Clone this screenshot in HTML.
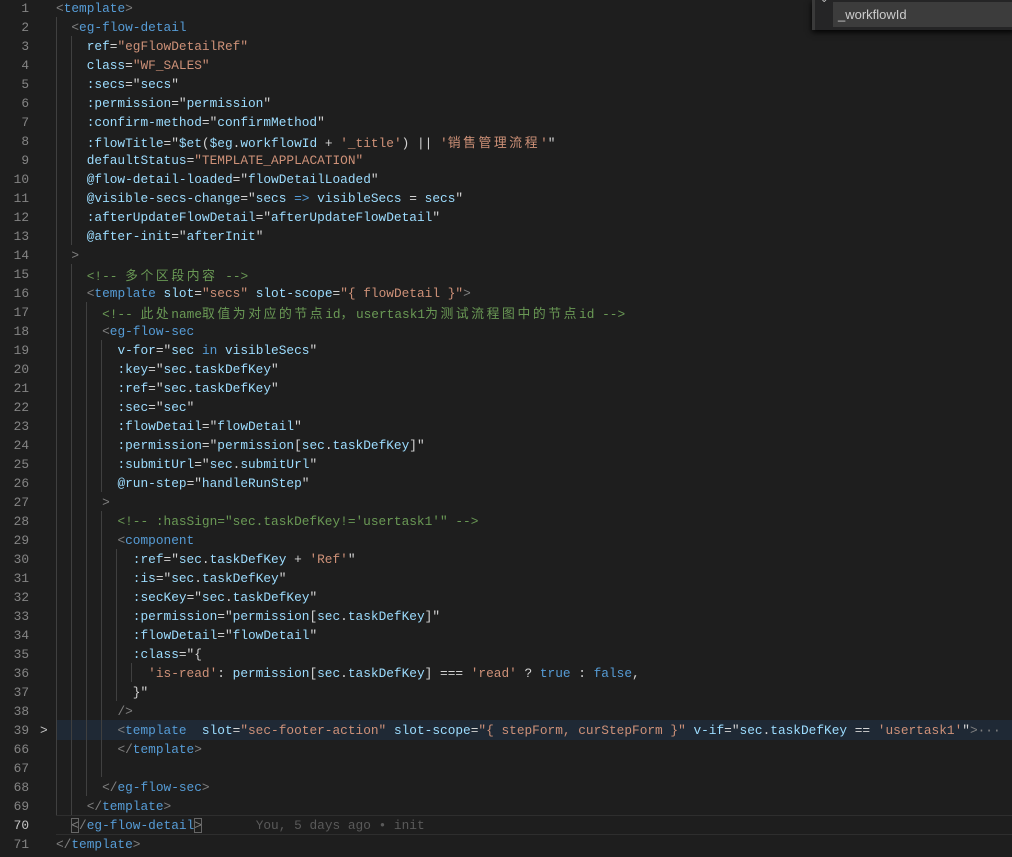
<!DOCTYPE html>
<html><head><meta charset="utf-8"><style>
html,body{margin:0;padding:0;background:#1e1e1e;width:1012px;height:857px;overflow:hidden;position:relative}
.r{position:absolute;left:0;height:19px;line-height:19px;width:1012px;white-space:pre;font-family:"Liberation Mono","Noto Sans CJK SC",monospace;font-size:12.8px;color:#d4d4d4}
.n{position:absolute;left:0;width:29px;text-align:right;color:#858585}
.x{position:absolute;left:56px}
.t{color:#569cd6}.g{color:#808080}.a{color:#9cdcfe}.s{color:#ce9178}.c{color:#6a9955}.k{color:#569cd6}.w{color:#d4d4d4}
.z{font-family:"Noto Sans CJK SC",sans-serif;letter-spacing:2.6px}
.gd{position:absolute;width:1px;background:#404040}
</style></head><body>
<div style="position:absolute;left:56px;right:0;top:720px;height:20px;background:#1f2935"></div>
<div style="position:absolute;left:56px;right:0;top:815px;height:18px;border-top:1px solid #2e2e2e;border-bottom:1px solid #2e2e2e"></div>
<div class="gd" style="left:56px;top:17px;height:798px"></div>
<div class="gd" style="left:71px;top:36px;height:209px"></div>
<div class="gd" style="left:71px;top:264px;height:551px"></div>
<div class="gd" style="left:86px;top:302px;height:494px"></div>
<div class="gd" style="left:101px;top:340px;height:152px"></div>
<div class="gd" style="left:101px;top:511px;height:266px"></div>
<div class="gd" style="left:116px;top:549px;height:152px"></div>
<div class="gd" style="left:131px;top:663px;height:19px"></div>

<div class="r" style="top:-1.5px"><span class="n">1</span><span class="x"><span class="g">&lt;</span><span class="t">template</span><span class="g">&gt;</span></span></div>
<div class="r" style="top:17.5px"><span class="n">2</span><span class="x">  <span class="g">&lt;</span><span class="t">eg-flow-detail</span></span></div>
<div class="r" style="top:36.5px"><span class="n">3</span><span class="x">    <span class="a">ref</span>=<span class="s">"egFlowDetailRef"</span></span></div>
<div class="r" style="top:55.5px"><span class="n">4</span><span class="x">    <span class="a">class</span>=<span class="s">"WF_SALES"</span></span></div>
<div class="r" style="top:74.5px"><span class="n">5</span><span class="x">    <span class="a">:secs</span>="<span class="a">secs</span>"</span></div>
<div class="r" style="top:93.5px"><span class="n">6</span><span class="x">    <span class="a">:permission</span>="<span class="a">permission</span>"</span></div>
<div class="r" style="top:112.5px"><span class="n">7</span><span class="x">    <span class="a">:confirm-method</span>="<span class="a">confirmMethod</span>"</span></div>
<div class="r" style="top:131.5px"><span class="n">8</span><span class="x">    <span class="a">:flowTitle</span>="<span class="a">$et</span>(<span class="a">$eg</span>.<span class="a">workflowId</span> + <span class="s">'_title'</span>) || <span class="s">'<span class="z">销售管理流程</span>'</span>"</span></div>
<div class="r" style="top:150.5px"><span class="n">9</span><span class="x">    <span class="a">defaultStatus</span>=<span class="s">"TEMPLATE_APPLACATION"</span></span></div>
<div class="r" style="top:169.5px"><span class="n">10</span><span class="x">    <span class="a">@flow-detail-loaded</span>="<span class="a">flowDetailLoaded</span>"</span></div>
<div class="r" style="top:188.5px"><span class="n">11</span><span class="x">    <span class="a">@visible-secs-change</span>="<span class="a">secs</span> <span class="k">=&gt;</span> <span class="a">visibleSecs</span> = <span class="a">secs</span>"</span></div>
<div class="r" style="top:207.5px"><span class="n">12</span><span class="x">    <span class="a">:afterUpdateFlowDetail</span>="<span class="a">afterUpdateFlowDetail</span>"</span></div>
<div class="r" style="top:226.5px"><span class="n">13</span><span class="x">    <span class="a">@after-init</span>="<span class="a">afterInit</span>"</span></div>
<div class="r" style="top:245.5px"><span class="n">14</span><span class="x">  <span class="g">&gt;</span></span></div>
<div class="r" style="top:264.5px"><span class="n">15</span><span class="x">    <span class="c">&lt;!-- <span class="z">多个区段内容</span> --&gt;</span></span></div>
<div class="r" style="top:283.5px"><span class="n">16</span><span class="x">    <span class="g">&lt;</span><span class="t">template</span> <span class="a">slot</span>=<span class="s">"secs"</span> <span class="a">slot-scope</span>=<span class="s">"{ flowDetail }"</span><span class="g">&gt;</span></span></div>
<div class="r" style="top:302.5px"><span class="n">17</span><span class="x">      <span class="c">&lt;!-- <span class="z">此处</span>name<span class="z">取值为对应的节点</span>id<span class="z">，</span>usertask1<span class="z">为测试流程图中的节点</span>id --&gt;</span></span></div>
<div class="r" style="top:321.5px"><span class="n">18</span><span class="x">      <span class="g">&lt;</span><span class="t">eg-flow-sec</span></span></div>
<div class="r" style="top:340.5px"><span class="n">19</span><span class="x">        <span class="a">v-for</span>="<span class="a">sec</span> <span class="k">in</span> <span class="a">visibleSecs</span>"</span></div>
<div class="r" style="top:359.5px"><span class="n">20</span><span class="x">        <span class="a">:key</span>="<span class="a">sec</span>.<span class="a">taskDefKey</span>"</span></div>
<div class="r" style="top:378.5px"><span class="n">21</span><span class="x">        <span class="a">:ref</span>="<span class="a">sec</span>.<span class="a">taskDefKey</span>"</span></div>
<div class="r" style="top:397.5px"><span class="n">22</span><span class="x">        <span class="a">:sec</span>="<span class="a">sec</span>"</span></div>
<div class="r" style="top:416.5px"><span class="n">23</span><span class="x">        <span class="a">:flowDetail</span>="<span class="a">flowDetail</span>"</span></div>
<div class="r" style="top:435.5px"><span class="n">24</span><span class="x">        <span class="a">:permission</span>="<span class="a">permission</span>[<span class="a">sec</span>.<span class="a">taskDefKey</span>]"</span></div>
<div class="r" style="top:454.5px"><span class="n">25</span><span class="x">        <span class="a">:submitUrl</span>="<span class="a">sec</span>.<span class="a">submitUrl</span>"</span></div>
<div class="r" style="top:473.5px"><span class="n">26</span><span class="x">        <span class="a">@run-step</span>="<span class="a">handleRunStep</span>"</span></div>
<div class="r" style="top:492.5px"><span class="n">27</span><span class="x">      <span class="g">&gt;</span></span></div>
<div class="r" style="top:511.5px"><span class="n">28</span><span class="x">        <span class="c">&lt;!-- :hasSign="sec.taskDefKey!='usertask1'" --&gt;</span></span></div>
<div class="r" style="top:530.5px"><span class="n">29</span><span class="x">        <span class="g">&lt;</span><span class="t">component</span></span></div>
<div class="r" style="top:549.5px"><span class="n">30</span><span class="x">          <span class="a">:ref</span>="<span class="a">sec</span>.<span class="a">taskDefKey</span> + <span class="s">'Ref'</span>"</span></div>
<div class="r" style="top:568.5px"><span class="n">31</span><span class="x">          <span class="a">:is</span>="<span class="a">sec</span>.<span class="a">taskDefKey</span>"</span></div>
<div class="r" style="top:587.5px"><span class="n">32</span><span class="x">          <span class="a">:secKey</span>="<span class="a">sec</span>.<span class="a">taskDefKey</span>"</span></div>
<div class="r" style="top:606.5px"><span class="n">33</span><span class="x">          <span class="a">:permission</span>="<span class="a">permission</span>[<span class="a">sec</span>.<span class="a">taskDefKey</span>]"</span></div>
<div class="r" style="top:625.5px"><span class="n">34</span><span class="x">          <span class="a">:flowDetail</span>="<span class="a">flowDetail</span>"</span></div>
<div class="r" style="top:644.5px"><span class="n">35</span><span class="x">          <span class="a">:class</span>="{</span></div>
<div class="r" style="top:663.5px"><span class="n">36</span><span class="x">            <span class="s">'is-read'</span>: <span class="a">permission</span>[<span class="a">sec</span>.<span class="a">taskDefKey</span>] === <span class="s">'read'</span> ? <span class="k">true</span> : <span class="k">false</span>,</span></div>
<div class="r" style="top:682.5px"><span class="n">37</span><span class="x">          }"</span></div>
<div class="r" style="top:701.5px"><span class="n">38</span><span class="x">        <span class="g">/&gt;</span></span></div>
<div class="r" style="top:720.5px"><span class="n">39</span><span style="position:absolute;left:40px;color:#c5c5c5">&gt;</span><span class="x">        <span class="g">&lt;</span><span class="t">template</span>  <span class="a">slot</span>=<span class="s">"sec-footer-action"</span> <span class="a">slot-scope</span>=<span class="s">"{ stepForm, curStepForm }"</span> <span class="a">v-if</span>="<span class="a">sec</span>.<span class="a">taskDefKey</span> == <span class="s">'usertask1'</span>"<span class="g">&gt;···</span></span></div>
<div class="r" style="top:739.5px"><span class="n">66</span><span class="x">        <span class="g">&lt;/</span><span class="t">template</span><span class="g">&gt;</span></span></div>
<div class="r" style="top:758.5px"><span class="n">67</span></div>
<div class="r" style="top:777.5px"><span class="n">68</span><span class="x">      <span class="g">&lt;/</span><span class="t">eg-flow-sec</span><span class="g">&gt;</span></span></div>
<div class="r" style="top:796.5px"><span class="n">69</span><span class="x">    <span class="g">&lt;/</span><span class="t">template</span><span class="g">&gt;</span></span></div>
<div class="r" style="top:815.5px"><span class="n" style="color:#c6c6c6">70</span><span class="x">  <span class="g" style="outline:1px solid #666;outline-offset:-1px">&lt;</span><span class="g">/</span><span class="t">eg-flow-detail</span><span class="g" style="outline:1px solid #666;outline-offset:-1px">&gt;</span>       <span style="color:#5a5a5a">You, 5 days ago • init</span></span></div>
<div class="r" style="top:834.5px"><span class="n">71</span><span class="x"><span class="g">&lt;/</span><span class="t">template</span><span class="g">&gt;</span></span></div>

<div style="position:absolute;left:812px;top:0;width:200px;height:30px;background:#252526;border-left:3px solid #3a3a3a;box-shadow:0 2px 6px #000"></div>
<div style="position:absolute;left:820px;top:-6px;color:#c5c5c5;font:10px 'Liberation Sans',sans-serif">⌄</div>
<div style="position:absolute;left:833px;top:2px;width:179px;height:25px;background:#3c3c3c;color:#cccccc;font:13px/25px 'Liberation Sans',sans-serif;padding-left:5px;box-sizing:border-box">_workflowId</div>
</body></html>
